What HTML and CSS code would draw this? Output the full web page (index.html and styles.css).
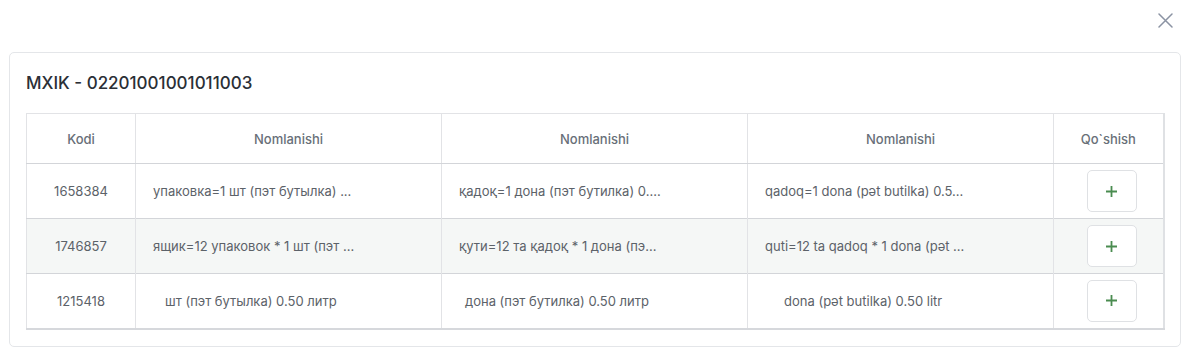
FILE: index.html
```html
<!DOCTYPE html>
<html>
<head>
<meta charset="utf-8">
<link rel="stylesheet" href="styles.css">
</head>
<body>
<div class="modal">
  <div class="topbar">
    <button class="close" aria-label="close">
      <svg width="15" height="15" viewBox="0 0 15 15"><path d="M1 1 L14 14 M14 1 L1 14" stroke="#8b93a3" stroke-width="1.5" fill="none" stroke-linecap="round"/></svg>
    </button>
  </div>
  <div class="card">
    <h2 class="title">MXIK - 02201001001011003</h2>
    <table class="tbl">
      <colgroup>
        <col class="c-code"><col class="c-name"><col class="c-name"><col class="c-name"><col class="c-add">
      </colgroup>
      <thead>
        <tr><th>Kodi</th><th>Nomlanishi</th><th>Nomlanishi</th><th>Nomlanishi</th><th>Qo`shish</th></tr>
      </thead>
      <tbody>
        <tr>
          <td class="code">1658384</td>
          <td class="name">упаковка=1 шт (пэт бутылка) ...</td>
          <td class="name">қадоқ=1 дона (пэт бутилка) 0....</td>
          <td class="name">qadoq=1 dona (pət butilka) 0.5...</td>
          <td class="add"><button class="plus" aria-label="add"><svg width="11" height="11" viewBox="0 0 11 11"><path d="M5.5 0 V11 M0 5.5 H11" stroke="#4a8c50" stroke-width="1.8" fill="none"/></svg></button></td>
        </tr>
        <tr class="alt">
          <td class="code">1746857</td>
          <td class="name">ящик=12 упаковок * 1 шт (пэт ...</td>
          <td class="name">қути=12 та қадоқ * 1 дона (пэ...</td>
          <td class="name">quti=12 ta qadoq * 1 dona (pət ...</td>
          <td class="add"><button class="plus" aria-label="add"><svg width="11" height="11" viewBox="0 0 11 11"><path d="M5.5 0 V11 M0 5.5 H11" stroke="#4a8c50" stroke-width="1.8" fill="none"/></svg></button></td>
        </tr>
        <tr>
          <td class="code">1215418</td>
          <td class="name ind-a">шт (пэт бутылка) 0.50 литр</td>
          <td class="name ind-b">дона (пэт бутилка) 0.50 литр</td>
          <td class="name ind-c">dona (pət butilka) 0.50 litr</td>
          <td class="add"><button class="plus" aria-label="add"><svg width="11" height="11" viewBox="0 0 11 11"><path d="M5.5 0 V11 M0 5.5 H11" stroke="#4a8c50" stroke-width="1.8" fill="none"/></svg></button></td>
        </tr>
      </tbody>
    </table>
  </div>
</div>
</body>
</html>
```

FILE: styles.css
```css
* { box-sizing: border-box; }
html, body { margin: 0; padding: 0; background: #fff; }
body {
  font-family: "Inter", "Noto Sans", sans-serif;
  color: #555b63;
  width: 1193px;
  height: 356px;
  overflow: hidden;
}
.modal { padding: 0 12px 0 9px; }
.topbar {
  height: 52px;
  display: flex;
  justify-content: flex-end;
  align-items: flex-start;
  padding-top: 13px;
}
.close {
  border: 0;
  background: transparent;
  padding: 0;
  width: 15px;
  height: 15px;
  margin-right: 8px;
  cursor: pointer;
  display: flex;
}
.card {
  border: 1px solid #e4e6e9;
  border-radius: 5px;
  padding: 17px 16px 17px 16px;
  height: 295px;
}
.title {
  margin: 0 0 17px 0;
  font-size: 17px;
  font-weight: 500;
  color: #2b2f36;
  line-height: 26px;
}
.tbl {
  width: 1137px;
  border-collapse: collapse;
  table-layout: fixed;
  border: 1px solid #e2e3e6;
  border-right: 2px solid #dfe1e4;
  border-bottom: 2px solid #d6d8dc;
  font-size: 13px;
}
.c-code { width: 109px; }
.c-name { width: 306px; }
.c-add { width: 110px; }
.tbl th {
  height: 50px;
  font-weight: 500;
  color: #686f78;
  text-align: center;
  border-left: 1px solid #e2e3e6;
  border-bottom: 1px solid #d3d5d9;
  padding: 0 8px;
}
.tbl td {
  height: 55px;
  border-left: 1px solid #e2e3e6;
  border-top: 1px solid #d3d5d9;
  padding: 0 8px;
  color: #5c6269;
  white-space: nowrap;
  overflow: hidden;
}
.tbl th:first-child, .tbl td:first-child { border-left: 0; }
.tbl tr.alt td { background: #f5f7f6; }
.tbl td.code { text-align: center; }
.tbl td.name { padding-left: 17px; }
.tbl td.ind-a { padding-left: 29px; }
.tbl td.ind-b { padding-left: 23px; }
.tbl td.ind-c { padding-left: 36px; }
.tbl td.add { text-align: center; padding: 0 0 0 7px; }
.plus {
  width: 50px;
  height: 42px;
  border: 1px solid #dfe1e4;
  border-radius: 5px;
  background: #fff;
  padding: 0;
  cursor: pointer;
  display: inline-flex;
  align-items: center;
  justify-content: center;
  vertical-align: middle;
}
```
